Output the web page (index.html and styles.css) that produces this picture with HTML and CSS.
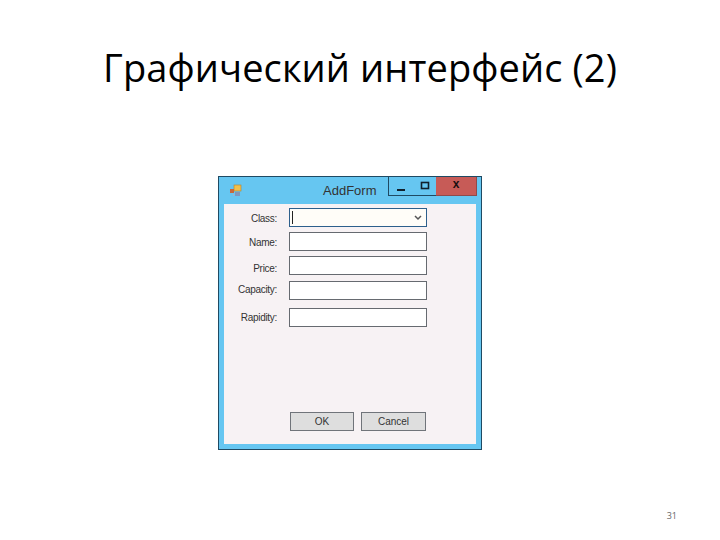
FILE: index.html
```html
<!DOCTYPE html>
<html lang="ru">
<head>
  <meta charset="UTF-8">
  <title>Графический интерфейс (2)</title>
  <link rel="stylesheet" href="styles.css">
</head>
<body>
  <div class="slide">
    <h1 class="slide-title">Графический интерфейс (2)</h1>

    <div class="window">
      <div class="title-bar">
        <svg class="app-icon" width="14" height="14" viewBox="0 0 14 14">
          <rect x="6" y="1" width="7" height="6" fill="#f2c04a" stroke="#b5802a" stroke-width="0.6"/>
          <rect x="2" y="5" width="4" height="4" fill="#c8683a"/>
          <rect x="7" y="8" width="5" height="4" fill="#7f97bd"/>
          <rect x="5" y="10" width="1" height="2" fill="#9fb4cf"/>
        </svg>
        <span class="window-title">AddForm</span>
        <div class="window-controls">
          <div class="control control-min">
            <svg class="icon-min" width="10" height="10" viewBox="0 0 10 10"><rect x="1" y="6" width="8" height="2" fill="#10202c"/></svg>
            <svg class="icon-max" width="10" height="10" viewBox="0 0 10 10"><rect x="1.5" y="1.5" width="7" height="6" fill="none" stroke="#10202c" stroke-width="1.6"/></svg>
          </div>
          <div class="control control-close">x</div>
        </div>
      </div>

      <div class="client">
        <div class="form-row row-class">
          <label>Class:</label>
          <div class="field field-select">
            <span class="caret"></span>
            <svg width="8" height="6" viewBox="0 0 8 6"><path d="M1 1l3 3 3-3" fill="none" stroke="#555" stroke-width="1.5"/></svg>
          </div>
        </div>
        <div class="form-row row-name">
          <label>Name:</label>
          <div class="field"></div>
        </div>
        <div class="form-row row-price">
          <label>Price:</label>
          <div class="field"></div>
        </div>
        <div class="form-row row-capacity">
          <label>Capacity:</label>
          <div class="field"></div>
        </div>
        <div class="form-row row-rapidity">
          <label>Rapidity:</label>
          <div class="field"></div>
        </div>

        <div class="buttons">
          <button class="btn btn-ok">OK</button>
          <button class="btn btn-cancel">Cancel</button>
        </div>
      </div>
    </div>

    <div class="page-number">31</div>
  </div>
</body>
</html>
```

FILE: styles.css
```css
/* Reset */
* {
  box-sizing: border-box;
  margin: 0;
  padding: 0;
}

body {
  background-color: #fff;
  font-family: "Liberation Sans", Arial, sans-serif;
}

/* Slide */
.slide {
  width: 720px;
  height: 540px;
  display: flex;
  flex-direction: column;
  overflow: hidden;
}

.slide-title {
  height: 176px;
  padding-top: 39px;
  text-align: center;
  font-family: "Open Sans", sans-serif;
  font-size: 38px;
  line-height: 56px;
  font-weight: 400;
  letter-spacing: 0.1px;
  color: #000;
}

/* Form window */
.window {
  width: 264px;
  height: 274px;
  margin-left: 218px;
  background-color: #66c6f1;
  border: 1px solid #1f4a63;
  display: flex;
  flex-direction: column;
}

.title-bar {
  height: 27px;
  display: flex;
  align-items: center;
  padding-left: 9px;
}

.app-icon {
  flex: none;
}

.window-title {
  margin-left: 81px;
  font-size: 13px;
  color: #333;
}

.window-controls {
  margin-left: auto;
  margin-right: 4px;
  height: 19px;
  align-self: flex-start;
  display: flex;
}

.control-min {
  width: 48px;
  border: 1px solid #1f4a63;
  border-top: none;
  border-right: none;
  display: flex;
  justify-content: space-between;
  padding: 0 6px 0 7px;
}

.icon-min {
  margin-top: 6px;
}

.icon-max {
  margin-top: 4px;
}

.control-close {
  width: 41px;
  background-color: #c75b57;
  border: 1px solid #8f4a4a;
  border-top: none;
  border-left: none;
  text-align: center;
  font-size: 12px;
  font-weight: bold;
  line-height: 15px;
  color: #1a1010;
}

.client {
  flex: 1;
  margin: 0 5px 5px;
  background-color: #f7f2f4;
  display: flex;
  flex-direction: column;
}

/* Form rows */
.form-row {
  display: flex;
  align-items: center;
  height: 19px;
}

.form-row label {
  width: 53px;
  flex: none;
  text-align: right;
  font-size: 10px;
  letter-spacing: -0.3px;
  color: #333;
}

.row-class { margin-top: 4px; }
.row-name { margin-top: 5px; }
.row-price { margin-top: 5px; }
.row-capacity { margin-top: 6px; }
.row-rapidity { margin-top: 8px; }

/* The labels in the screenshot don't sit quite level with their fields */
.row-class label { margin-top: 2px; }
.row-name label { margin-top: 2px; }
.row-price label { margin-top: 6px; }
.row-capacity label { margin-bottom: 2px; }

.field {
  width: 138px;
  height: 19px;
  margin-left: 12px;
  background-color: #fff;
  border: 1px solid #666a70;
}

.field-select {
  border-color: #2d5f8c;
  display: flex;
  align-items: center;
  justify-content: space-between;
  padding: 0 4px 0 2px;
  background-color: #fffdf8;
}

.caret {
  width: 1px;
  height: 13px;
  background-color: #222;
}

/* Buttons */
.buttons {
  margin-top: auto;
  margin-bottom: 13px;
  margin-left: 66px;
  display: flex;
  gap: 7px;
}

.btn {
  width: 64px;
  height: 19px;
  background-color: #dedede;
  border: 1px solid #70747a;
  font-family: "Liberation Sans", Arial, sans-serif;
  font-size: 10px;
  color: #333;
}

.btn-cancel {
  width: 65px;
}

/* Page number */
.page-number {
  margin-top: 59px;
  padding-right: 43px;
  text-align: right;
  font-family: "Open Sans", sans-serif;
  font-size: 9px;
  color: #666;
}
```
